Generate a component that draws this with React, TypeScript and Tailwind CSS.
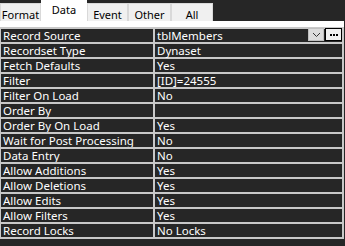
import React from "react";

const rows: [string, string][] = [
  ["Record Source", "tblMembers"],
  ["Recordset Type", "Dynaset"],
  ["Fetch Defaults", "Yes"],
  ["Filter", "[ID]=24555"],
  ["Filter On Load", "No"],
  ["Order By", ""],
  ["Order By On Load", "Yes"],
  ["Wait for Post Processing", "No"],
  ["Data Entry", "No"],
  ["Allow Additions", "Yes"],
  ["Allow Deletions", "Yes"],
  ["Allow Edits", "Yes"],
  ["Allow Filters", "Yes"],
  ["Record Locks", "No Locks"],
];

const tabs = ["Format", "Data", "Event", "Other", "All"];
const tabWidths: Record<string, string> = {
  Format: "w-[41px]",
  Data: "w-[46px]",
  Event: "w-[41px]",
  Other: "w-[43px]",
  All: "w-[42px]",
};

function Tab({ label }: { label: string }) {
  if (label === "Data") {
    return (
      <div className={`${tabWidths[label]} h-[21px] bg-white flex justify-center pt-[3px] text-black`}>
        {label}
      </div>
    );
  }
  return (
    <div
      className={`${tabWidths[label]} h-[18px] bg-[#f0f0f0] border border-b-0 border-[#d9d9d9] flex justify-center items-center pt-[3px] text-black`}
    >
      {label}
    </div>
  );
}

export default function App() {
  return (
    <div
      className="w-[345px] h-[246px] bg-[#262626] overflow-hidden text-[11.5px] leading-[13px]"
      style={{ fontFamily: '"Noto Sans", sans-serif' }}
    >
      {/* tab strip */}
      <div className="flex items-end h-[21px] text-[11px]">
        {tabs.map((t) => (
          <Tab key={t} label={t} />
        ))}
      </div>
      <div className="w-[344px] h-[6px] bg-white" />
      {/* property grid */}
      <div className="w-[344px] bg-[#c8c8c8] flex flex-col gap-[2px] pt-[2px] pb-[2px] pl-[1px] pr-[2px]">
        {rows.map(([k, v], i) => (
          <div key={k} className="flex gap-[2px] h-[13px]">
            <div className="w-[152px] bg-[#262626] text-white pl-[2px] whitespace-nowrap overflow-hidden">
              {k}
            </div>
            <div className="flex-1 bg-[#262626] text-white pl-[2px] flex items-start relative">
              <span className="whitespace-nowrap">{v}</span>
              {i === 0 && (
                <div className="absolute right-0 top-[-1px] flex gap-[1px]">
                  <div className="w-[16px] h-[13px] bg-[#dcdcdc] border border-[#c0c0c0] flex items-center justify-center">
                    <svg width="9" height="6" viewBox="0 0 9 6">
                      <path d="M1 1 L4.5 4.5 L8 1" fill="none" stroke="#333" strokeWidth="1" />
                    </svg>
                  </div>
                  <div className="w-[17px] h-[13px] bg-[#f0f0f0] border border-black flex items-center justify-center gap-[1px]">
                    <span className="w-[2px] h-[2px] bg-black" />
                    <span className="w-[2px] h-[2px] bg-black" />
                    <span className="w-[2px] h-[2px] bg-black" />
                  </div>
                </div>
              )}
            </div>
          </div>
        ))}
      </div>
    </div>
  );
}
